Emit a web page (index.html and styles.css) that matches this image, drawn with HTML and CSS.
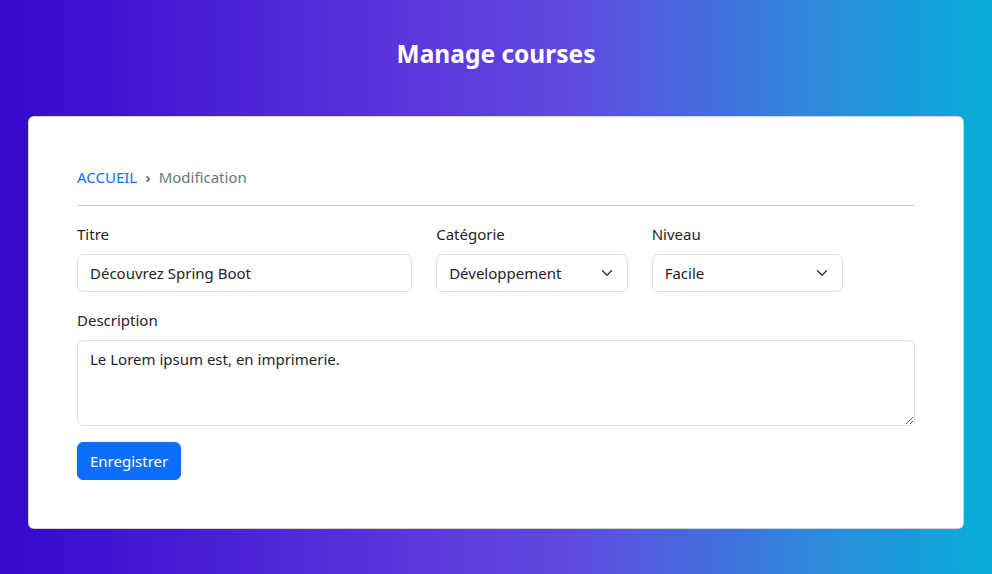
FILE: index.html
```html
<!DOCTYPE html>
<html lang="fr">
<head>
<meta charset="utf-8">
<title>Manage courses</title>
<link rel="stylesheet" href="styles.css">
</head>
<body>
<div class="container">
  <h3 class="page-title">Manage courses</h3>
  <div class="card">
    <nav class="breadcrumb">
      <a href="#" class="crumb-link">ACCUEIL</a>
      <span class="crumb-sep">›</span>
      <span class="crumb-active">Modification</span>
    </nav>
    <hr class="divider">
    <form class="form">
      <div class="row">
        <div class="field col-5">
          <label class="label" for="titre">Titre</label>
          <input class="control" id="titre" type="text" value="Découvrez Spring Boot">
        </div>
        <div class="field col-3">
          <label class="label" for="cat">Catégorie</label>
          <select class="control select" id="cat">
            <option>Développement</option>
          </select>
        </div>
        <div class="field col-3">
          <label class="label" for="niv">Niveau</label>
          <select class="control select" id="niv">
            <option>Facile</option>
          </select>
        </div>
      </div>
      <div class="field">
        <label class="label" for="desc">Description</label>
        <textarea class="control textarea" id="desc" rows="3">Le Lorem ipsum est, en imprimerie.</textarea>
      </div>
      <button type="button" class="btn">Enregistrer</button>
    </form>
  </div>
</div>
</body>
</html>
```

FILE: styles.css
```css
* { box-sizing: border-box; }
html, body { height: 100%; }
body {
  margin: 0;
  font-family: "Segoe UI", "Noto Sans", "Open Sans", sans-serif;
  font-size: 15px;
  line-height: 24px;
  color: #212529;
  background: linear-gradient(90deg, #3508cc 0%, #5a35dc 40%, #6148e0 57%, #2f88dc 82%, #07aed8 100%);
}
.container {
  width: 960px;
  margin: 0 auto;
  padding: 0 12px;
}
.page-title {
  margin: 0;
  padding: 39px 0 48px;
  text-align: center;
  color: #fff;
  font-size: 24.5px;
  font-weight: 700;
  line-height: 29px;
}
.card {
  background: #fff;
  border: 1px solid rgba(0,0,0,.175);
  border-radius: 6px;
  padding: 48px;
}
.breadcrumb {
  display: flex;
  align-items: center;
  gap: 8px;
}
.crumb-link { color: #0d6efd; text-decoration: none; }
.crumb-sep { color: #6c757d; font-weight: 700; }
.crumb-active { color: #6c757d; }
.divider {
  margin: 16px 0 16px;
  border: 0;
  border-top: 1px solid #212529;
  opacity: .25;
}
.row {
  display: grid;
  grid-template-columns: repeat(12, 1fr);
  column-gap: 24px;
}
.col-5 { grid-column: span 5; }
.col-3 { grid-column: span 3; }
.field { margin-bottom: 16px; }
.label {
  display: block;
  margin-bottom: 8px;
}
.control {
  display: block;
  width: 100%;
  padding: 6px 12px;
  font: inherit;
  line-height: 24px;
  color: #212529;
  background: #fff;
  border: 1px solid #dee2e6;
  border-radius: 6px;
  height: 38px;
  margin: 0;
}
.select {
  appearance: none;
  -webkit-appearance: none;
  padding-right: 36px;
  background-image: url("data:image/svg+xml,%3csvg xmlns='http://www.w3.org/2000/svg' viewBox='0 0 16 16'%3e%3cpath fill='none' stroke='%23343a40' stroke-linecap='round' stroke-linejoin='round' stroke-width='2' d='m2 5 6 6 6-6'/%3e%3c/svg%3e");
  background-repeat: no-repeat;
  background-position: right 12px center;
  background-size: 16px 12px;
}
.textarea {
  height: 86px;
  resize: vertical;
}
.btn {
  display: inline-block;
  padding: 6px 12px;
  font: inherit;
  line-height: 24px;
  color: #fff;
  background: #0d6efd;
  border: 1px solid #0d6efd;
  border-radius: 6px;
  cursor: pointer;
}
```
